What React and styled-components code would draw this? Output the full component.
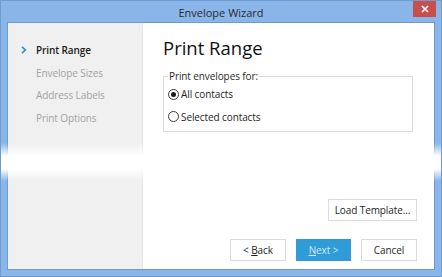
import styled, { createGlobalStyle } from "styled-components";

const Global = createGlobalStyle`
  html, body { margin: 0; padding: 0; background: #fff; }
  * { box-sizing: border-box; }
`;

const steps = ["Print Range", "Envelope Sizes", "Address Labels", "Print Options"];

const App = () => {
  return (
    <Window>
      <Global />
      <TitleBar>
        <Title>Envelope Wizard</Title>
        <CloseButton>
          <svg width="8" height="8" viewBox="0 0 8 8">
            <path d="M1 1 L7 7 M7 1 L1 7" stroke="#fff" strokeWidth="1.6" />
          </svg>
        </CloseButton>
      </TitleBar>
      <Body>
        <Sidebar>
          {steps.map((s, i) => (
            <Step key={s} active={i === 0}>
              <Chevron>
                {i === 0 && (
                  <svg width="6" height="8" viewBox="0 0 6 8">
                    <path d="M1 0.8 L4.4 4 L1 7.2" stroke="#3a8ad6" strokeWidth="1.7" fill="none" />
                  </svg>
                )}
              </Chevron>
              {s}
            </Step>
          ))}
        </Sidebar>
        <Content>
          <Heading>Print Range</Heading>
          <Group>
            <Legend>Print envelopes for:</Legend>
            <Option>
              <Radio checked />
              All contacts
            </Option>
            <Option>
              <Radio />
              Selected contacts
            </Option>
          </Group>
          <Spacer />
          <TemplateRow>
            <Button width={89}>Load Template...</Button>
          </TemplateRow>
          <Footer>
            <Button width={56}>
              <span>
                &lt; <u>B</u>ack
              </span>
            </Button>
            <Button width={55} primary>
              <span>
                <u>N</u>ext &gt;
              </span>
            </Button>
            <Button width={56}>Cancel</Button>
          </Footer>
        </Content>
      </Body>
      <Fade />
    </Window>
  );
};

const Window = styled.div`
  position: relative;
  width: 442px;
  height: 277px;
  background: #89b5e8;
  border: 1px solid #6d9bd3;
  display: flex;
  flex-direction: column;
  font-family: "Open Sans", "Noto Sans", sans-serif;
  overflow: hidden;
`;

const TitleBar = styled.div`
  height: 21px;
  position: relative;
  display: flex;
  align-items: center;
  justify-content: center;
`;

const Title = styled.div`
  font-size: 11px;
  color: #2b2b2b;
  margin-top: 2px;
`;

const CloseButton = styled.div`
  position: absolute;
  top: -1px;
  right: 5px;
  width: 23px;
  height: 17px;
  background: #c7504f;
  display: flex;
  align-items: center;
  justify-content: center;
`;

const Body = styled.div`
  flex: 1;
  margin: 0 6px 6px 6px;
  border: 1px solid #6f9acd;
  display: flex;
  background: #fff;
`;

const Sidebar = styled.div`
  width: 135px;
  background: #f0f0f0;
  border-right: 1px solid #e6e6e6;
  padding-top: 16px;
`;

const Step = styled.div`
  height: 22.6px;
  display: flex;
  align-items: center;
  font-size: 10px;
  font-weight: ${(p) => (p.active ? 600 : 400)};
  color: ${(p) => (p.active ? "#1b1b1b" : "#a3a3a3")};
  letter-spacing: -0.1px;
`;

const Chevron = styled.span`
  width: 28px;
  padding-left: 13px;
  display: flex;
  align-items: center;
`;

const Content = styled.div`
  flex: 1;
  display: flex;
  flex-direction: column;
  padding: 11px 17px 8px 20px;
`;

const Heading = styled.h1`
  margin: 0;
  font-size: 18.5px;
  font-weight: 400;
  color: #111;
  line-height: 28px;
`;

const Group = styled.fieldset`
  margin: 7px 4px 0 0;
  border: 1px solid #dcdcdc;
  padding: 0 4px 3px 4px;
  font-size: 10px;
  color: #1e1e1e;
`;

const Legend = styled.legend`
  padding: 0 1px;
  margin-left: 0;
  font-size: 10px;
  letter-spacing: -0.1px;
  color: #2a2a2a;
`;

const Option = styled.label`
  display: flex;
  align-items: center;
  height: 22.5px;
  font-size: 10px;
  letter-spacing: -0.1px;
  color: #1e1e1e;
`;

const Radio = styled.span`
  width: 11px;
  height: 11px;
  border-radius: 50%;
  border: 1px solid #3c3c3c;
  margin-right: 2px;
  display: inline-flex;
  align-items: center;
  justify-content: center;
  &::after {
    content: "";
    width: 5px;
    height: 5px;
    border-radius: 50%;
    background: ${(p) => (p.checked ? "#1a1a1a" : "transparent")};
  }
`;

const Spacer = styled.div`
  flex: 1;
`;

const TemplateRow = styled.div`
  display: flex;
  justify-content: flex-end;
  margin-bottom: 18px;
`;

const Footer = styled.div`
  display: flex;
  justify-content: flex-end;
  gap: 10px;
`;

const Button = styled.div`
  width: ${(p) => p.width}px;
  height: 22px;
  display: flex;
  align-items: center;
  justify-content: center;
  font-size: 10px;
  letter-spacing: -0.1px;
  background: ${(p) => (p.primary ? "#2f9bd7" : "#fff")};
  color: ${(p) => (p.primary ? "#d4e9f7" : "#1e1e1e")};
  border: 1px solid ${(p) => (p.primary ? "#2f9bd7" : "#dcdcdc")};
  u { text-decoration: underline; }
`;

const Fade = styled.div`
  position: absolute;
  left: -1px;
  right: -1px;
  top: 142px;
  height: 40px;
  pointer-events: none;
  background: linear-gradient(
    to bottom,
    rgba(255, 255, 255, 0) 0px,
    rgba(255, 255, 255, 1) 13px,
    rgba(255, 255, 255, 1) 26px,
    rgba(255, 255, 255, 0) 38px
  );
`;

export default App;
